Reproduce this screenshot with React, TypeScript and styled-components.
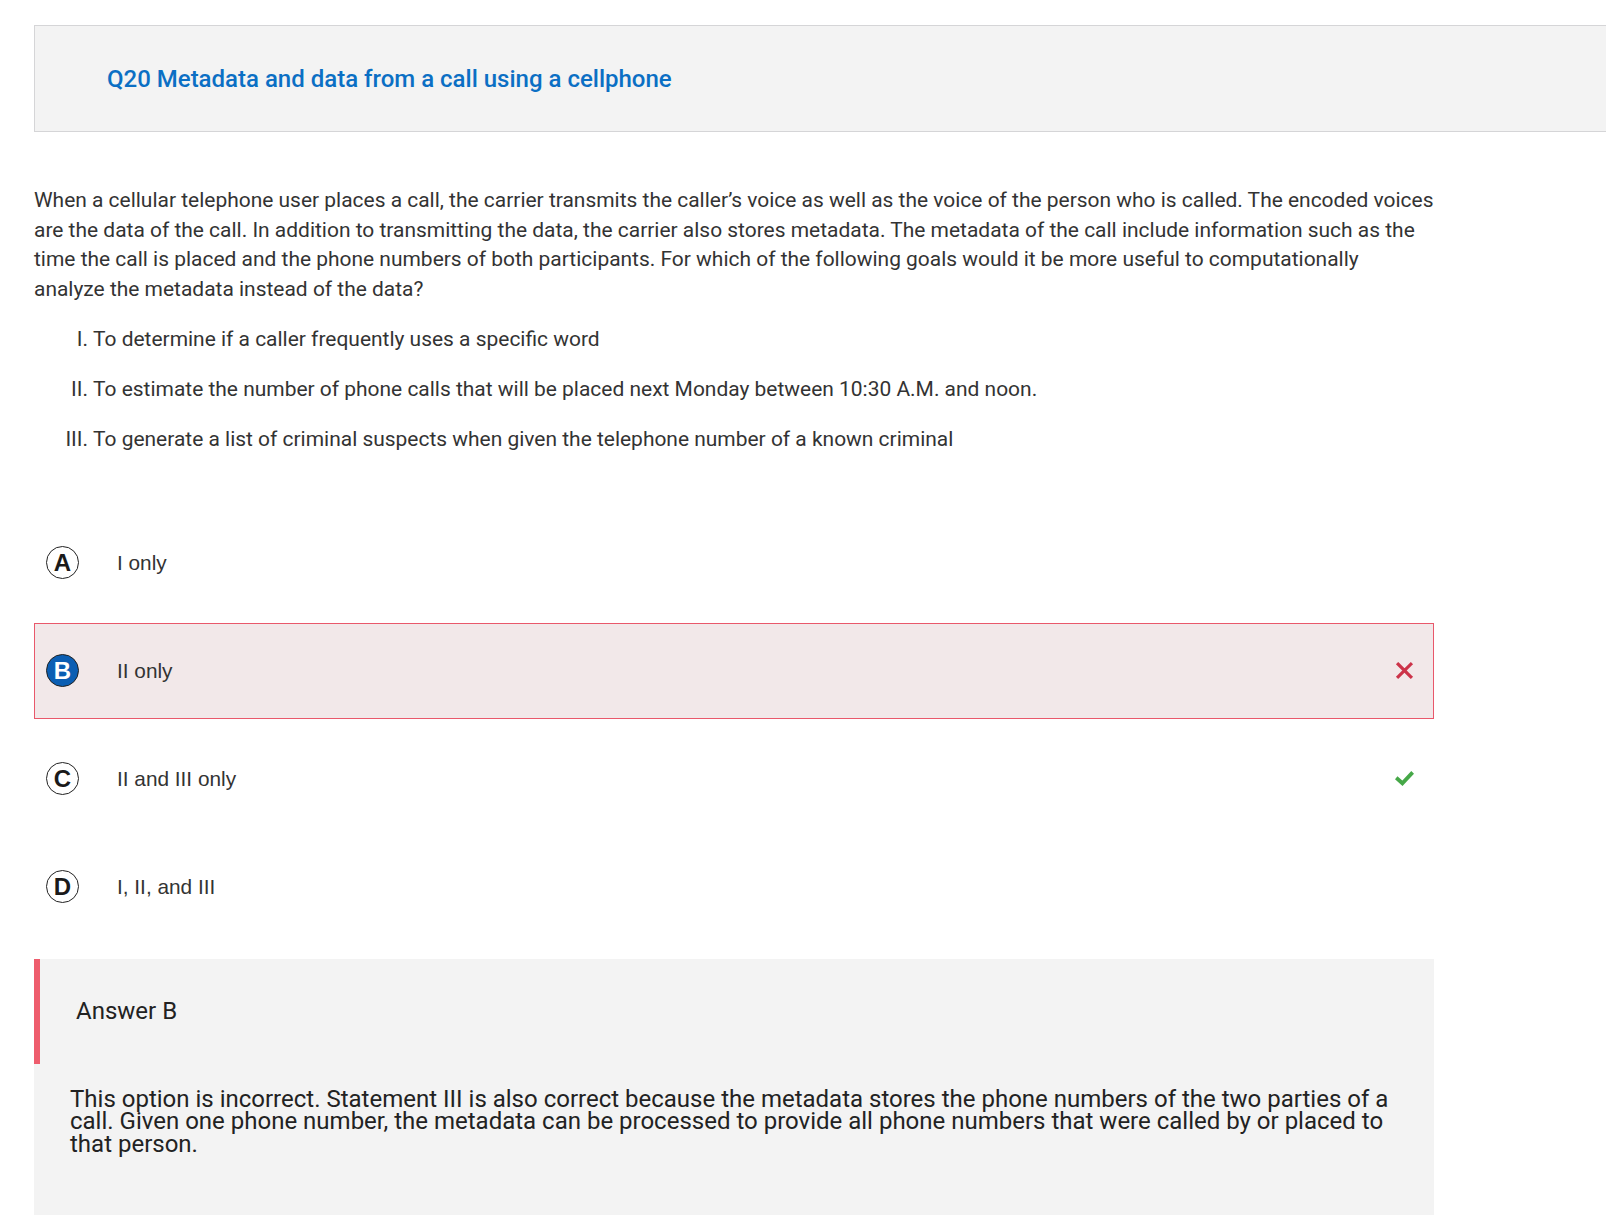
import React from "react";
import styled, { createGlobalStyle, css } from "styled-components";

const GlobalStyle = createGlobalStyle`
  html, body {
    margin: 0;
    padding: 0;
    overflow: hidden;
    background: #ffffff;
  }
  body {
    font-family: Roboto, "Liberation Sans", Arial, sans-serif;
    color: #333333;
  }
`;

const Page = styled.div`
  padding: 25px 0 0 34px;
`;

const Header = styled.header`
  box-sizing: border-box;
  height: 107px;
  margin-right: -20px;
  display: flex;
  align-items: center;
  padding-left: 72px;
  background: #f3f3f3;
  border: 1px solid #d5d5d7;
`;

const Title = styled.h1`
  margin: 0;
  font-family: Roboto, sans-serif;
  font-size: 24px;
  font-weight: 500;
  color: #0b6fc4;
  line-height: 1;
`;

const Column = styled.main`
  width: 1400px;
`;

const Stem = styled.p`
  margin: 54px 0 0;
  font-size: 20.96px;
  line-height: 29.7px;
  color: #333333;
`;

const Statements = styled.ol`
  list-style: none;
  margin: 20px 0 0;
  padding: 0;
  display: flex;
  flex-direction: column;
  gap: 20.3px;
`;

const Statement = styled.li`
  display: flex;
  font-size: 20.96px;
  line-height: 29.7px;
  color: #333333;
`;

const Numeral = styled.span`
  box-sizing: border-box;
  width: 59px;
  padding-right: 5px;
  text-align: right;
  flex: none;
`;

const Options = styled.div`
  margin-top: 60px;
  display: flex;
  flex-direction: column;
  gap: 12px;
`;

const OptionRow = styled.div<{ $state?: "wrong" | "none" }>`
  box-sizing: border-box;
  height: 96px;
  display: flex;
  align-items: center;
  padding: 0 19px 0 11px;
  border: 1px solid transparent;
  ${(p) =>
    p.$state === "wrong" &&
    css`
      background: #f2e8e9;
      border-color: #e9586b;
    `}
`;

const Letter = styled.span<{ $selected?: boolean }>`
  box-sizing: border-box;
  width: 33px;
  height: 33px;
  border-radius: 50%;
  flex: none;
  display: flex;
  align-items: center;
  justify-content: center;
  font-family: "Liberation Sans", Arial, sans-serif;
  font-weight: 700;
  font-size: 24px;
  border: 1.5px solid #222222;
  background: ${(p) => (p.$selected ? "#0b5eb3" : "#ffffff")};
  color: ${(p) => (p.$selected ? "#ffffff" : "#1a1a1a")};
`;

const OptionText = styled.span`
  margin-left: 38px;
  flex: 1;
  font-family: "Liberation Sans", Arial, sans-serif;
  font-size: 20.8px;
  color: #333333;
`;

const Mark = styled.svg`
  width: 19px;
  height: 19px;
  flex: none;
`;

const AnswerBox = styled.section`
  margin-top: 24px;
  background: #f3f3f3;
  padding-bottom: 80px;
`;

const AnswerHead = styled.div`
  box-sizing: border-box;
  height: 105px;
  display: flex;
  align-items: center;
  padding-left: 36px;
  border-left: 6px solid #ee5d6d;
`;

const AnswerTitle = styled.h2`
  margin: 0;
  font-family: Roboto, sans-serif;
  font-weight: 400;
  font-size: 24px;
  color: #222222;
`;

const Explanation = styled.p`
  margin: 24px 0 0;
  padding: 0 40px 0 36px;
  font-size: 24px;
  line-height: 22.5px;
  color: #222222;
`;

const WrongIcon = () => (
  <Mark viewBox="0 0 18 18">
    <path d="M3 3 L15 15 M15 3 L3 15" stroke="#cc3349" strokeWidth="3" strokeLinecap="square" />
  </Mark>
);

const RightIcon = () => (
  <Mark viewBox="0 0 18 18">
    <path d="M2.5 9.5 L7 13.5 L15.5 4.5" stroke="#46a848" strokeWidth="3.6" fill="none" strokeLinecap="square" />
  </Mark>
);

const options = [
  { key: "A", text: "I only" },
  { key: "B", text: "II only", selected: true, wrong: true },
  { key: "C", text: "II and III only", correct: true },
  { key: "D", text: "I, II, and III" },
];

const statements = [
  { n: "I.", text: "To determine if a caller frequently uses a specific word" },
  { n: "II.", text: "To estimate the number of phone calls that will be placed next Monday between 10:30 A.M. and noon." },
  { n: "III.", text: "To generate a list of criminal suspects when given the telephone number of a known criminal" },
];

export default function App() {
  return (
    <>
      <GlobalStyle />
      <Page>
        <Header>
          <Title>Q20 Metadata and data from a call using a cellphone</Title>
        </Header>
        <Column>
          <Stem>
            When a cellular telephone user places a call, the carrier transmits the caller’s voice as well as the voice of the person who is called. The encoded voices are the data of the call. In addition to transmitting the data, the carrier also stores metadata. The metadata of the call include information such as the time the call is placed and the phone numbers of both participants. For which of the following goals would it be more useful to computationally analyze the metadata instead of the data?
          </Stem>
          <Statements>
            {statements.map((s) => (
              <Statement key={s.n}>
                <Numeral>{s.n}</Numeral>
                <span>{s.text}</span>
              </Statement>
            ))}
          </Statements>
          <Options>
            {options.map((o) => (
              <OptionRow key={o.key} $state={o.wrong ? "wrong" : "none"}>
                <Letter $selected={o.selected}>{o.key}</Letter>
                <OptionText>{o.text}</OptionText>
                {o.wrong && <WrongIcon />}
                {o.correct && <RightIcon />}
              </OptionRow>
            ))}
          </Options>
          <AnswerBox>
            <AnswerHead>
              <AnswerTitle>Answer B</AnswerTitle>
            </AnswerHead>
            <Explanation>
              This option is incorrect. Statement III is also correct because the metadata stores the phone numbers of the two parties of a call. Given one phone number, the metadata can be processed to provide all phone numbers that were called by or placed to that person.
            </Explanation>
          </AnswerBox>
        </Column>
      </Page>
    </>
  );
}
